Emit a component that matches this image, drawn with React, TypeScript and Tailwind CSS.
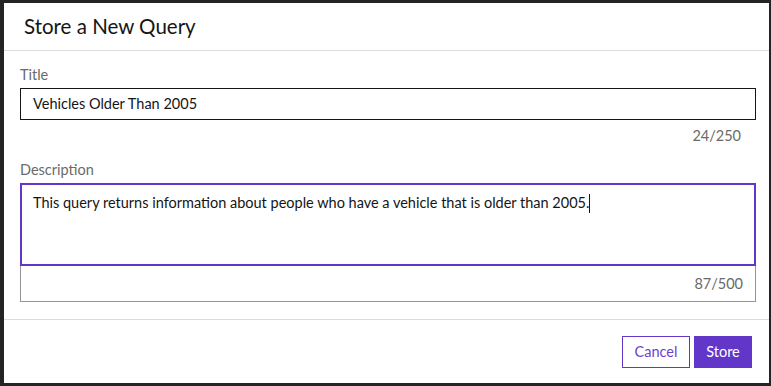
export default function App() {
  return (
    <div className="w-[771px] h-[386px] bg-[#242424] pt-[3px] pl-[4px] pr-[2px] pb-[3px] font-['Lato',sans-serif]">
      <div className="h-full bg-white flex flex-col">
        {/* Header */}
        <div className="h-[48px] shrink-0 flex items-center px-[20px] border-b border-[#dcdcdc]">
          <h2 className="text-[20.5px] text-[#151515] leading-none">Store a New Query</h2>
        </div>

        {/* Body */}
        <div className="flex-1 pl-[16px] pr-[13px] pt-[15px]">
          <label className="block text-[14.5px] leading-[18px] text-[#6a6a6a]">Title</label>
          <div className="mt-[4px] h-[32px] border border-[#151515] flex items-center px-[12px] text-[14.5px] text-[#151515]">
            Vehicles Older Than 2005
          </div>
          <div className="text-right pr-[15px] pt-[7px] text-[14.5px] leading-[18px] text-[#6a6a6a]">24/250</div>

          <label className="block mt-[16px] text-[14.5px] leading-[18px] text-[#6a6a6a]">Description</label>
          <div className="mt-[4px] h-[83px] border-2 border-[#6236c8] px-[11px] pt-[9px] text-[14.5px] leading-[18px] text-[#151515]">
            This query returns information about people who have a vehicle that is older than 2005.
            <span className="inline-block w-px h-[19px] bg-[#151515] align-middle -mt-[2px]" />
          </div>
          <div className="h-[36px] border border-t-0 border-[#959595] flex items-center justify-end pr-[12px] text-[14.5px] text-[#6a6a6a]">
            87/500
          </div>
        </div>

        {/* Footer */}
        <div className="h-[64px] shrink-0 border-t border-[#dcdcdc] flex items-start justify-end gap-[4px] pt-[16px] pr-[17px]">
          <button className="h-[32px] w-[68px] border border-[#6236c8] text-[#6d41d0] text-[14.5px] bg-white">Cancel</button>
          <button className="h-[32px] w-[58px] bg-[#6236c8] text-white text-[14.5px]">Store</button>
        </div>
      </div>
    </div>
  );
}
